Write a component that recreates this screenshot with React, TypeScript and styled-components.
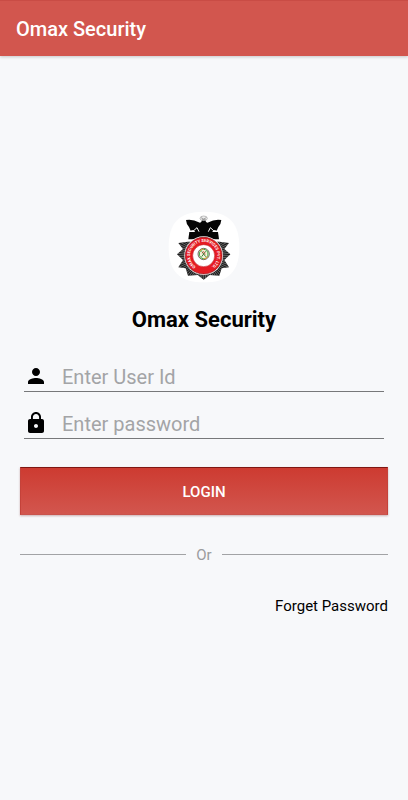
import React from "react";
import styled, { createGlobalStyle } from "styled-components";
import { MdLock, MdPerson } from "react-icons/md";

const GlobalStyle = createGlobalStyle`
  *, *::before, *::after { box-sizing: border-box; }
  body {
    margin: 0;
    background: #f7f8fa;
    color: #000;
    font-family: Roboto, "Liberation Sans", sans-serif;
  }
`;

const Page = styled.div`
  min-height: 100vh;
  display: flex;
  flex-direction: column;
`;

const AppBar = styled.header`
  height: 56px;
  padding: 0 16px;
  display: flex;
  align-items: center;
  background: #d2564e;
  border-top: 1px solid #c94c45;
  box-shadow: 0 1px 3px rgba(0, 0, 0, 0.2);
`;

const AppTitle = styled.div`
  color: #fff;
  font-size: 20px;
  font-weight: 500;
  line-height: 24px;
`;

const Main = styled.main`
  flex: 1;
  padding: 155px 20px 24px;
  display: flex;
  flex-direction: column;
`;

const Logo = styled.svg`
  align-self: center;
  width: 72px;
  height: 72px;
`;

const Name = styled.h1`
  margin: 23px 0 26px;
  font-size: 22px;
  line-height: 28px;
  font-weight: 700;
  text-align: center;
`;

const Form = styled.form`
  display: flex;
  flex-direction: column;
`;

const Fields = styled.div`
  margin: 0 4px 28px;
  display: flex;
  flex-direction: column;
  gap: 15px;
`;

const Field = styled.label`
  height: 32px;
  display: flex;
  align-items: center;
  gap: 14px;
  border-bottom: 1px solid #77787a;
`;

const Input = styled.input`
  flex: 1;
  min-width: 0;
  height: 30px;
  padding: 2px 0 0;
  border: 0;
  outline: 0;
  background: transparent;
  font: 400 20px/28px Roboto, "Liberation Sans", sans-serif;
  color: #000;
  &::placeholder {
    color: #a3a4a6;
    opacity: 1;
  }
`;

const LoginButton = styled.button`
  height: 48px;
  padding: 2px 16px 0;
  border: 1px solid #c4423a;
  border-top-color: #7f1712;
  border-bottom-color: #c9544d;
  background: linear-gradient(#cd3b31, #d2564e);
  box-shadow: 0 1px 2px rgba(120, 40, 40, 0.35);
  color: #fff;
  font: 500 15px/20px Roboto, "Liberation Sans", sans-serif;
  cursor: pointer;
`;

const Divider = styled.div`
  margin-top: 30px;
  display: flex;
  align-items: center;
  gap: 10px;
  color: #9b9c9e;
  font-size: 15px;
  line-height: 20px;
  &::before,
  &::after {
    content: "";
    flex: 1;
    height: 1px;
    margin-bottom: 2px;
    background: #a2a3a5;
  }
`;

const ForgetLink = styled.a`
  margin-top: 31px;
  align-self: flex-end;
  color: #000;
  font-size: 15px;
  line-height: 20px;
  text-decoration: none;
`;

const BADGE_X = 107;
const BADGE_Y = 134;

const STAR =
  "M107 206L89 192L60 194L53 172L31 169L45 147L27 130L45 114L31 96L60 92H154L183 96L169 114L187 130L169 147L183 169L161 172L154 194L125 192Z";

const rays = Array.from({ length: 72 }, (_, i) => {
  const angle = (i * Math.PI) / 36;
  const dx = Math.cos(angle);
  const dy = Math.sin(angle);
  return `M${BADGE_X + 56 * dx} ${BADGE_Y + 56 * dy}L${BADGE_X + 84 * dx} ${BADGE_Y + 84 * dy}`;
}).join("");

function BadgeLogo() {
  return (
    <Logo viewBox="0 0 216 216" role="img" aria-label="Omax Security badge">
      <defs>
        <path id="motto" d="M83 167A41 41 0 1 1 131 167" />
        <clipPath id="star">
          <path d={STAR} />
        </clipPath>
      </defs>
      <path
        fill="#fff"
        d="M108 2C182 2 214 34 214 108S182 214 108 214S2 182 2 108S34 2 108 2Z"
      />
      <path d={STAR} fill="#1c1c1c" />
      <path d={rays} stroke="#bdbdbd" strokeWidth="1.4" clipPath="url(#star)" />
      <path d="M58 58H156L160 88H54Z" fill="#fff" />
      <path d="M64 63H150L153 85H61Z" fill="#050505" />
      <path
        d="M54 27Q76 24 92 34Q98 37 101 31Q101 24 107 24Q113 24 113 31Q116 37 122 34Q138 24 160 27Q159 40 151 48L146 59L137 58L129 67L126 78H88L85 67L77 58L68 59L63 48Q55 40 54 27Z"
        fill="#050505"
      />
      <path
        d="M68 61L77 59L87 50L93 62M146 61L137 59L127 50L121 62"
        stroke="#fff"
        strokeWidth="3"
        fill="none"
      />
      <ellipse cx="107" cy="22" rx="11" ry="7" fill="#eee" stroke="#888" strokeWidth="1.5" />
      <path d="M99 20L107 24L115 20M102 26H113" fill="none" stroke="#777" strokeWidth="2" />
      <circle cx={BADGE_X} cy={BADGE_Y} r="58" fill="#fff" />
      <circle cx={BADGE_X} cy={BADGE_Y} r="55" fill="#e51b23" stroke="#8d1115" strokeWidth="2" />
      <circle cx={BADGE_X} cy={BADGE_Y} r="33" fill="#fff" stroke="#b8141a" strokeWidth="1.5" />
      <text fill="#fff" fontFamily="Roboto, sans-serif" fontSize="12" fontWeight="700">
        <textPath href="#motto" startOffset="50%" textAnchor="middle">
          OMAX SECURITY SERVICES PVT. LTD.
        </textPath>
      </text>
      <ellipse cx="107" cy="129" rx="17" ry="17" fill="#f6f3dc" stroke="#30231b" strokeWidth="2" />
      <ellipse cx="107" cy="129" rx="13" ry="14" fill="none" stroke="#39a544" strokeWidth="3" />
      <path d="M96 120Q99 113 107 115M118 136Q115 145 107 143" fill="none" stroke="#e0a33b" strokeWidth="3" />
      <path d="M101 121L113 137M113 121L101 137" stroke="#3a7e35" strokeWidth="3" />
      <path d="M102 127L107 121L112 131" fill="none" stroke="#d6453d" strokeWidth="2" />
    </Logo>
  );
}

export default function App() {
  return (
    <Page>
      <GlobalStyle />
      <AppBar>
        <AppTitle>Omax Security</AppTitle>
      </AppBar>
      <Main>
        <BadgeLogo />
        <Name>Omax Security</Name>
        <Form onSubmit={(event) => event.preventDefault()}>
          <Fields>
            <Field>
              <MdPerson size={24} aria-hidden="true" />
              <Input type="text" placeholder="Enter User Id" aria-label="User Id" autoComplete="username" />
            </Field>
            <Field>
              <MdLock size={24} aria-hidden="true" />
              <Input
                type="password"
                placeholder="Enter password"
                aria-label="Password"
                autoComplete="current-password"
              />
            </Field>
          </Fields>
          <LoginButton type="submit">LOGIN</LoginButton>
        </Form>
        <Divider>Or</Divider>
        <ForgetLink href="#forget-password">Forget Password</ForgetLink>
      </Main>
    </Page>
  );
}
